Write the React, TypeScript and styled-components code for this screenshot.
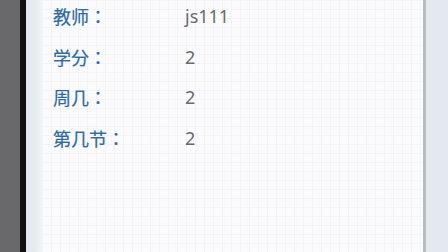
import { Fragment } from 'react'
import styled, { createGlobalStyle } from 'styled-components'

//#region STYLE
const GlobalStyle = createGlobalStyle`
	html, body {
		margin: 0;
		padding: 0;
		background: #ffffff;
	}
	#root {
		width: 448px;
		height: 252px;
		overflow: hidden;
	}
`

const Screen = styled.div`
	display: flex;
	width: 448px;
	height: 252px;
	overflow: hidden;
	font-family: "Noto Sans", "Noto Sans CJK SC", sans-serif;
`

const Casing = styled.div<{ $width: number; $color: string }>`
	flex: 0 0 ${p => p.$width}px;
	background: ${p => p.$color};
`

const Bezel = styled.div`
	flex: 0 0 16px;
	background: linear-gradient(to right, #e3e8ee 0%, #e6ebf0 60%, #f3f5f8 100%);
`

const Content = styled.div`
	flex: 1;
	padding-left: 11px;
	background-color: #fbfbfe;
	background-image:
		linear-gradient(to right, #f4f3f9 1px, transparent 1px),
		linear-gradient(to bottom, #f4f3f9 1px, transparent 1px);
	background-size: 9px 9px;
`

const Details = styled.div`
	display: grid;
	grid-template-columns: 132px 1fr;
	grid-auto-rows: 40.7px;
	margin-top: -4px;
	font-size: 18px;
	line-height: 40.7px;
`

const Label = styled.div`
	color: #2d6aa3;
	font-family: "Noto Sans CJK JP", "Noto Sans CJK SC", sans-serif;
	-webkit-text-stroke: 0.2px #2d6aa3;
`

const Value = styled.div`
	color: #6a6a6a;
`

const Divider = styled.div`
	flex: 0 0 3px;
	background: #b7bcc1;
`

const SideStrip = styled.div`
	flex: 0 0 22px;
	background: #e4e9ef;
`
//#endregion

const rows = [
	{ label: '教师：', value: 'js111' },
	{ label: '学分：', value: '2' },
	{ label: '周几：', value: '2' },
	{ label: '第几节：', value: '2' },
]

const App = () => (
	<>
		<GlobalStyle />
		<Screen>
			<Casing $width={20} $color='#69686b' />
			<Casing $width={6} $color='#111111' />
			<Bezel />
			<Content>
				<Details>
					{rows.map(row => (
						<Fragment key={row.label}>
							<Label>{row.label}</Label>
							<Value>{row.value}</Value>
						</Fragment>
					))}
				</Details>
			</Content>
			<Divider />
			<SideStrip />
		</Screen>
	</>
)

export default App
